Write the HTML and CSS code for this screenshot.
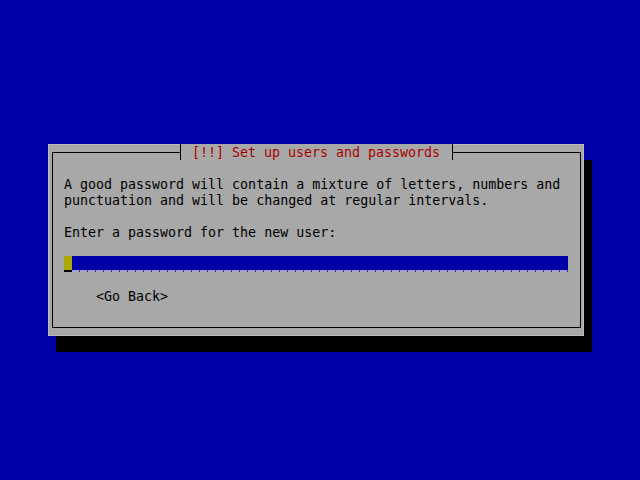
FILE: index.html
```html
<!DOCTYPE html>
<html>
<head>
<meta charset="utf-8">
<title>Set up users and passwords</title>
<link rel="stylesheet" href="styles.css">
</head>
<body>
  <div class="dialog">
    <div class="frame">
      <div class="title-row"><span class="title">[!!] Set up users and passwords</span></div>
      <div class="content">
        <p class="line first">A good password will contain a mixture of letters, numbers and</p>
        <p class="line">punctuation and will be changed at regular intervals.</p>
        <p class="line spaced">Enter a password for the new user:</p>
        <div class="entry"><span class="cursor"></span></div>
        <div class="buttons"><span class="btn">&lt;Go Back&gt;</span></div>
      </div>
    </div>
  </div>
</body>
</html>
```
FILE: styles.css
```css
html, body {
  margin: 0;
  height: 100%;
  background: #0000a8;
}
body {
  box-sizing: border-box;
  padding: 144px 0 0 48px;
  font-family: "DejaVu Sans Mono", "Liberation Mono", monospace;
  font-size: 13.3px;
  line-height: 16px;
  color: #000;
}
.dialog {
  box-sizing: border-box;
  width: 536px;
  height: 192px;
  padding: 8px 3px 8px 4px;
  background: #a8a8a8;
  box-shadow: inset 0 0 0 1px #bcbcbc, 8px 16px 0 #000;
}
.frame {
  box-sizing: border-box;
  height: 100%;
  border: 1px solid #000;
}
.title-row {
  display: flex;
  justify-content: center;
  margin-top: -9px;
  height: 16px;
}
.title {
  display: block;
  box-sizing: border-box;
  height: 16px;
  padding: 1px 12px 0 11px;
  background: #a8a8a8;
  color: #a80000;
  border-left: 1px solid #000;
  border-right: 1px solid #000;
  white-space: pre;
  overflow: visible;
}
.content {
  padding-left: 11px;
}
.line {
  box-sizing: border-box;
  margin: 0;
  height: 16px;
  padding-top: 1px;
  white-space: pre;
}
.line.first,
.line.spaced {
  margin-top: 16px;
}
.entry {
  display: flex;
  margin-top: 16px;
  width: 504px;
  height: 16px;
  background:
    repeating-linear-gradient(90deg, #a4a4cc 0 7px, #30306c 7px 8px) left 0 bottom 0 / 100% 2px no-repeat,
    #0000a8;
}
.cursor {
  display: block;
  width: 8px;
  height: 16px;
  background:
    linear-gradient(#000, #000) left 0 bottom 0 / 100% 2px no-repeat,
    #a8a800;
}
.buttons {
  box-sizing: border-box;
  margin-top: 16px;
  padding: 1px 0 0 32px;
  height: 16px;
}
.btn {
  white-space: pre;
}
```
